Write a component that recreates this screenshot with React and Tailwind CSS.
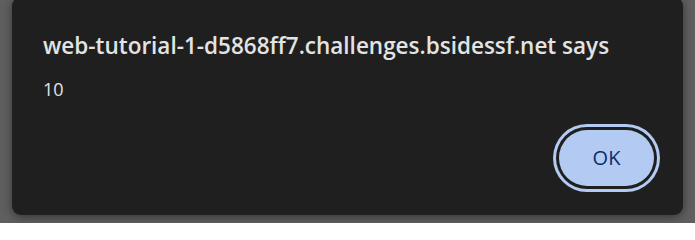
import React from 'react'

const AlertDialog = ({ origin, message }) => {
  return (
    <div className="w-[671px] h-[218px] -mt-[3px] rounded-[9px] bg-[#1f1f1f] shadow-[0_2px_10px_rgba(0,0,0,0.45)] flex flex-col pl-[31px] pr-[29px]">
      <div className="pt-[34px] text-[22.5px] leading-[30px] font-semibold text-[#e3e3e3] whitespace-nowrap">
        {origin} says
      </div>
      <div className="mt-[16px] text-[18px] leading-[24px] text-[#e3e3e3]">{message}</div>
      <div className="flex justify-end mt-auto pb-[29px]">
        <button className="w-[95px] h-[56px] rounded-full bg-[#b3cbf3] text-[#0b2d6e] text-[20px] font-medium shadow-[0_0_0_3px_#1f1f1f,0_0_0_6px_#b3cbf3]">
          OK
        </button>
      </div>
    </div>
  )
}

const App = () => {
  return (
    <div
      className="w-[695px] h-[223px] overflow-hidden bg-[#5f5f5f] px-[12px]"
      style={{ fontFamily: '"Open Sans", "Noto Sans", sans-serif' }}
    >
      <AlertDialog origin="web-tutorial-1-d5868ff7.challenges.bsidessf.net" message="10" />
    </div>
  )
}

export default App
